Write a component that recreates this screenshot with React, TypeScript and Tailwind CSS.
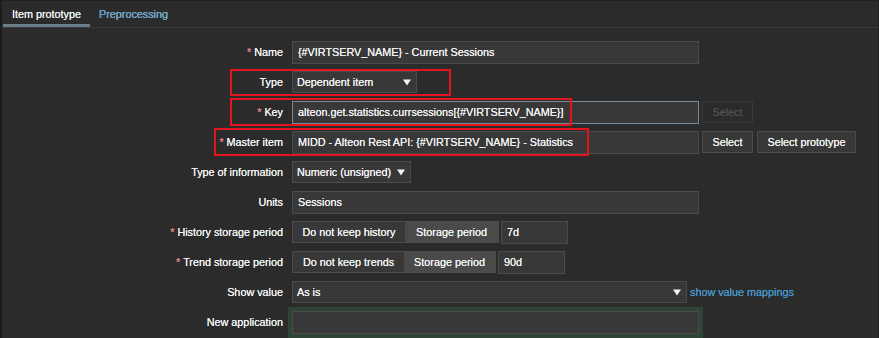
import type { ReactNode } from "react";

const FONT = "font-['Liberation_Sans',Arial,sans-serif]";

function Arrow() {
  return (
    <svg width="8" height="7" viewBox="0 0 8 7" className="ml-[6px] shrink-0">
      <path d="M0 0.5 H8 L4 6.5 Z" fill="#f2f2f2" />
    </svg>
  );
}

function Row({ label, required, children }: { label: string; required?: boolean; children: ReactNode }) {
  return (
    <div className="flex h-[30px] items-center">
      <div className="w-[281px] shrink-0 whitespace-nowrap text-right text-[10.8px] text-[#f2f2f2] [text-shadow:0_0_0.3px_#fff]">
        {required && <span className="mr-[3px] text-[#e45959]">*</span>}
        {label}
      </div>
      <div className="ml-[9px] flex items-center">{children}</div>
    </div>
  );
}

function TextBox({ value, w, focused }: { value: string; w: string; focused?: boolean }) {
  return (
    <div
      className={`${w} flex h-[23px] items-center whitespace-nowrap border bg-[#383838] pl-[5px] text-[10.8px] text-[#f2f2f2] [text-shadow:0_0_0.3px_#fff] ${
        focused ? "border-[#74899a]" : "border-[#4b4b4b]"
      }`}
    >
      {value}
    </div>
  );
}

function SelectBox({ value, w }: { value: string; w: string }) {
  return (
    <div className={`${w} flex h-[22px] items-center justify-between whitespace-nowrap border border-[#4b4b4b] bg-[#383838] pl-[4px] pr-[5px] text-[10.8px] text-[#f2f2f2] [text-shadow:0_0_0.3px_#fff]`}>
      <span>{value}</span>
      <Arrow />
    </div>
  );
}

function Btn({ children, w, disabled }: { children: ReactNode; w: string; disabled?: boolean }) {
  return (
    <div
      className={`${w} flex h-[22px] items-center justify-center whitespace-nowrap border text-[10.8px] ${
        disabled
          ? "border-[#383838] bg-[#2b2b2b] text-[#5a5a5a]"
          : "border-[#4b4b4b] bg-[#383838] text-[#f2f2f2] [text-shadow:0_0_0.3px_#fff]"
      }`}
    >
      {children}
    </div>
  );
}

function Segmented({ off, on, offW, onW }: { off: string; on: string; offW: string; onW: string }) {
  return (
    <div className="flex h-[22px] whitespace-nowrap border border-[#4b4b4b] text-[10.8px] text-[#f2f2f2] [text-shadow:0_0_0.3px_#fff]">
      <div className={`${offW} flex items-center justify-center bg-[#383838]`}>{off}</div>
      <div className={`${onW} flex items-center justify-center bg-[#4a4a4a]`}>{on}</div>
    </div>
  );
}

export default function App() {
  return (
    <div className={`${FONT} relative h-[338px] w-[879px] overflow-hidden border-l-2 border-r border-t border-l-[#1c1c1c] border-r-[#1f1f1f] border-t-[#1f1f1f] bg-[#2b2b2b]`}>
      {/* tabs */}
      <div className="flex h-[27px] items-stretch border-b border-[#3a3a3a] text-[10.8px] [text-shadow:0_0_0.3px_#fff]">
        <div className="ml-px flex w-[87px] items-center justify-center border-b-[3px] border-[#6b7f8b] pt-[3px] text-[#f2f2f2]">
          Item prototype
        </div>
        <div className="ml-[9px] flex items-center text-[#4796c8]">Preprocessing</div>
      </div>

      {/* form */}
      <div className="pt-[9px]">
        <Row label="Name" required>
          <TextBox value="{#VIRTSERV_NAME} - Current Sessions" w="w-[407px]" />
        </Row>
        <Row label="Type">
          <SelectBox value="Dependent item" w="w-[125px]" />
        </Row>
        <Row label="Key" required>
          <TextBox value="alteon.get.statistics.currsessions[{#VIRTSERV_NAME}]" w="w-[407px]" focused />
          <div className="ml-[3px]">
            <Btn w="w-[51px]" disabled>Select</Btn>
          </div>
        </Row>
        <Row label="Master item" required>
          <TextBox value="MIDD - Alteon Rest API: {#VIRTSERV_NAME} - Statistics" w="w-[407px]" />
          <div className="ml-[3px] flex gap-[4px]">
            <Btn w="w-[51px]">Select</Btn>
            <Btn w="w-[99px]">Select prototype</Btn>
          </div>
        </Row>
        <Row label="Type of information">
          <SelectBox value="Numeric (unsigned)" w="w-[119px]" />
        </Row>
        <Row label="Units">
          <TextBox value="Sessions" w="w-[407px]" />
        </Row>
        <Row label="History storage period" required>
          <Segmented off="Do not keep history" on="Storage period" offW="w-[112px]" onW="w-[93px]" />
          <div className="ml-[2px]">
            <TextBox value="7d" w="w-[67px]" />
          </div>
        </Row>
        <Row label="Trend storage period" required>
          <Segmented off="Do not keep trends" on="Storage period" offW="w-[111px]" onW="w-[91px]" />
          <div className="ml-[2px]">
            <TextBox value="90d" w="w-[67px]" />
          </div>
        </Row>
        <Row label="Show value">
          <SelectBox value="As is" w="w-[395px]" />
          <span className="ml-[3px] text-[10.8px] text-[#4796c8] [text-shadow:0_0_0.3px_#4796c8]">show value mappings</span>
        </Row>
        <Row label="New application">
          <div className="shadow-[0_0_0_4px_#2e4535]">
            <TextBox value="" w="w-[407px]" />
          </div>
        </Row>
      </div>

      {/* red annotation boxes */}
      <div className="absolute left-[228px] top-[68px] h-[27px] w-[221px] border-2 border-[#e3141c]" />
      <div className="absolute left-[228px] top-[97px] h-[28px] w-[342px] border-2 border-[#e3141c]" />
      <div className="absolute left-[212px] top-[127px] h-[28px] w-[375px] border-2 border-[#e3141c]" />
    </div>
  );
}
